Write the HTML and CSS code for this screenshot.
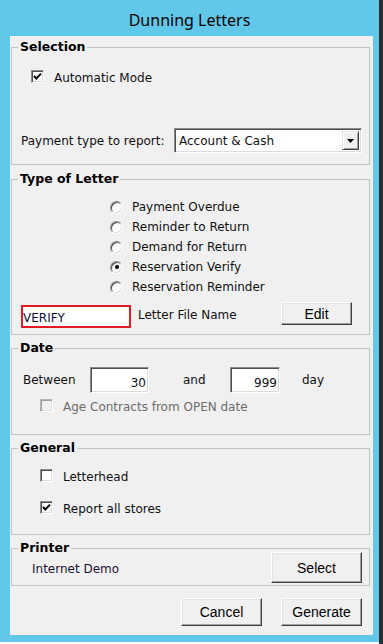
FILE: index.html
```html
<!DOCTYPE html>
<html>
<head>
<meta charset="utf-8">
<link rel="stylesheet" href="styles.css">
</head>
<body>
<div class="screen">
  <div class="window">
    <div class="titlebar">Dunning Letters</div>
    <div class="client">
      <fieldset class="group g-selection">
        <legend>Selection</legend>
        <div class="chk-row auto-row">
          <span class="chk"><svg viewBox="0 0 11 11" width="11" height="11"><path d="M2 5 L4.3 7.5 L9 2.6" fill="none" stroke="#000" stroke-width="1.9"/></svg></span>
          <span class="chk-text">Automatic Mode</span>
        </div>
        <div class="pay-row">
          <span class="pay-label">Payment type to report:</span>
          <div class="combo">
            <span class="combo-text">Account &amp; Cash</span>
            <span class="combo-btn"><svg viewBox="0 0 7 4" width="7" height="4"><path d="M0 0 H7 L3.5 4 Z" fill="#000"/></svg></span>
          </div>
        </div>
      </fieldset>

      <fieldset class="group g-type">
        <legend>Type of Letter</legend>
        <div class="radios">
          <div class="radio-row"><span class="radio"></span><span>Payment Overdue</span></div>
          <div class="radio-row"><span class="radio"></span><span>Reminder to Return</span></div>
          <div class="radio-row"><span class="radio"></span><span>Demand for Return</span></div>
          <div class="radio-row"><span class="radio on"></span><span>Reservation Verify</span></div>
          <div class="radio-row"><span class="radio"></span><span>Reservation Reminder</span></div>
        </div>
        <div class="file-row">
          <div class="verify">VERIFY</div>
          <span class="file-label">Letter File Name</span>
          <div class="btn btn-edit">Edit</div>
        </div>
      </fieldset>

      <fieldset class="group g-date">
        <legend>Date</legend>
        <div class="date-row">
          <span class="between">Between</span>
          <div class="num num1">30</div>
          <span class="and">and</span>
          <div class="num num2">999</div>
          <span class="day">day</span>
        </div>
        <div class="chk-row age-row">
          <span class="chk disabled"></span>
          <span class="chk-text dis-text">Age Contracts from OPEN date</span>
        </div>
      </fieldset>

      <fieldset class="group g-general">
        <legend>General</legend>
        <div class="chk-row gen-row1">
          <span class="chk"></span>
          <span class="chk-text">Letterhead</span>
        </div>
        <div class="chk-row gen-row2">
          <span class="chk"><svg viewBox="0 0 11 11" width="11" height="11"><path d="M2 5 L4.3 7.5 L9 2.6" fill="none" stroke="#000" stroke-width="1.9"/></svg></span>
          <span class="chk-text">Report all stores</span>
        </div>
      </fieldset>

      <fieldset class="group g-printer">
        <legend>Printer</legend>
        <div class="printer-row">
          <span class="printer-name">Internet Demo</span>
          <div class="btn btn-select">Select</div>
        </div>
      </fieldset>

      <div class="actions">
        <div class="btn btn-action">Cancel</div>
        <div class="btn btn-action">Generate</div>
      </div>
    </div>
  </div>
  <div class="edge"></div>
</div>
</body>
</html>
```

FILE: styles.css
```css
html, body {
  margin: 0;
  padding: 0;
  background: #ffffff;
}
body {
  font-family: "DejaVu Sans", "Noto Sans", sans-serif;
  font-size: 12px;
  color: #111;
}
.screen {
  display: flex;
  width: 383px;
  height: 644px;
}
.window {
  width: 379px;
  height: 642px;
  background: #62c8ea;
  display: flex;
  flex-direction: column;
}
.edge {
  width: 4px;
  height: 644px;
  background: #2a2e33;
}
.titlebar {
  height: 36px;
  box-sizing: border-box;
  padding-top: 3px;
  display: flex;
  align-items: center;
  justify-content: center;
  font-family: "Noto Sans", sans-serif;
  font-size: 16px;
  color: #000;
}
.client {
  flex: 1;
  margin: 0 6px 7px 10px;
  background: #f0f0f0;
  padding-top: 4px;
  display: flex;
  flex-direction: column;
}
.group {
  margin: 0 3px 0 1px;
  padding: 0;
  border: 1px solid #c4c4c4;
  box-sizing: border-box;
  min-width: 0;
}
.group legend {
  margin-left: 6px;
  padding: 0 2px;
  font-weight: bold;
  font-size: 12.5px;
  line-height: 14px;
  color: #000;
}
.g-selection { height: 125px; }
.g-type { height: 163px; margin-top: 7px; }
.g-date { height: 94px; margin-top: 6px; }
.g-general { height: 94px; margin-top: 6px; }
.g-printer { height: 45px; margin-top: 6px; }

/* checkbox */
.chk-row {
  display: flex;
  align-items: flex-start;
  height: 13px;
}
.chk {
  width: 13px;
  height: 13px;
  box-sizing: border-box;
  background: #fff;
  border: 1px solid;
  border-color: #8a8a8a #ffffff #ffffff #8a8a8a;
  box-shadow: inset 1px 1px 0 #505050, inset -1px -1px 0 #dcdcdc;
  display: flex;
  align-items: center;
  justify-content: center;
  flex: none;
}
.chk svg { display: block; }
.chk.disabled {
  background: #f0f0f0;
  border-color: #b4b4b4 #ffffff #ffffff #b4b4b4;
  box-shadow: inset 1px 1px 0 #a0a0a0, inset -1px -1px 0 #e3e3e3;
}
.chk-text {
  margin-left: 10px;
  line-height: 13px;
  padding-top: 2px;
}
.dis-text { color: #6d6d6d; }

.auto-row { margin-top: 16px; padding-left: 19px; }

.pay-row {
  display: flex;
  align-items: center;
  margin-top: 45px;
  padding-left: 9px;
}
.pay-label { padding-top: 1px; }
.combo {
  margin-left: auto;
  margin-right: 7px;
  width: 188px;
  height: 25px;
  box-sizing: border-box;
  background: #fff;
  border: 1px solid;
  border-color: #8a8a8a #ffffff #ffffff #8a8a8a;
  box-shadow: inset 1px 1px 0 #505050, inset -1px -1px 0 #dcdcdc;
  display: flex;
  align-items: center;
  padding: 2px;
}
.combo-text {
  flex: 1;
  padding-left: 2px;
  padding-top: 1px;
  font-size: 12px;
}
.combo-btn {
  width: 17px;
  height: 19px;
  box-sizing: border-box;
  background: #f0f0f0;
  border: 1px solid;
  border-color: #e3e3e3 #404040 #404040 #e3e3e3;
  box-shadow: inset 1px 1px 0 #fff, inset -1px -1px 0 #a0a0a0;
  display: flex;
  align-items: center;
  justify-content: center;
}
.combo-btn svg { display: block; }

/* radios */
.radios {
  margin-top: 11px;
  padding-left: 98px;
}
.radio-row {
  display: flex;
  align-items: center;
  height: 20px;
}
.radio {
  width: 13px;
  height: 13px;
  box-sizing: border-box;
  border-radius: 50%;
  background: #fff;
  border: 1px solid;
  border-color: #8a8a8a #ffffff #ffffff #8a8a8a;
  box-shadow: inset 1px 1px 0 #505050, inset -1px -1px 0 #dcdcdc;
  margin-right: 9px;
  display: flex;
  align-items: center;
  justify-content: center;
  flex: none;
}
.radio.on::after {
  content: "";
  width: 4px;
  height: 4px;
  border-radius: 50%;
  background: #000;
}

.file-row {
  display: flex;
  align-items: flex-start;
  margin-top: 5px;
  padding-left: 9px;
}
.verify {
  width: 110px;
  height: 23px;
  margin-top: 3px;
  box-sizing: border-box;
  border: 2px solid #e31b23;
  background: #fff;
  padding-top: 4px;
  padding-left: 0;
  color: #10103a;
}
.file-label {
  margin-left: 7px;
  margin-top: 6px;
}

/* buttons */
.btn {
  box-sizing: border-box;
  background: #f0f0f0;
  border: 1px solid;
  border-color: #ffffff #404040 #404040 #ffffff;
  box-shadow: inset -1px -1px 0 #a0a0a0, inset 1px 1px 0 #e3e3e3;
  display: flex;
  align-items: center;
  justify-content: center;
  font-family: "Liberation Sans", Arial, sans-serif;
  font-size: 14px;
  color: #000;
}
.btn-edit {
  margin-left: auto;
  margin-right: 17px;
  width: 71px;
  height: 23px;
}

/* date */
.date-row {
  display: flex;
  align-items: center;
  margin-top: 12px;
  padding-left: 11px;
  height: 26px;
}
.between { width: 67px; }
.num {
  height: 26px;
  box-sizing: border-box;
  background: #fff;
  border: 1px solid;
  border-color: #8a8a8a #ffffff #ffffff #8a8a8a;
  box-shadow: inset 1px 1px 0 #505050, inset -1px -1px 0 #dcdcdc;
  text-align: right;
  padding-right: 2px;
  padding-top: 8px;
}
.num1 { width: 59px; }
.num2 { width: 50px; }
.and { margin-left: 34px; width: 47px; }
.day { margin-left: 22px; }
.age-row { margin-top: 6px; padding-left: 28px; }

/* general */
.gen-row1 { margin-top: 14px; padding-left: 28px; }
.gen-row2 { margin-top: 19px; padding-left: 28px; }

/* printer */
.printer-row {
  display: flex;
  align-items: center;
  margin-top: -3px;
  padding-left: 20px;
}
.printer-name { padding-top: 3px; color: #1a1030; }
.btn-select {
  margin-left: auto;
  margin-right: 7px;
  width: 91px;
  height: 31px;
}

.actions {
  display: flex;
  justify-content: flex-end;
  gap: 19px;
  margin-top: 12px;
  padding-right: 11px;
}
.btn-action {
  width: 81px;
  height: 28px;
}
```
